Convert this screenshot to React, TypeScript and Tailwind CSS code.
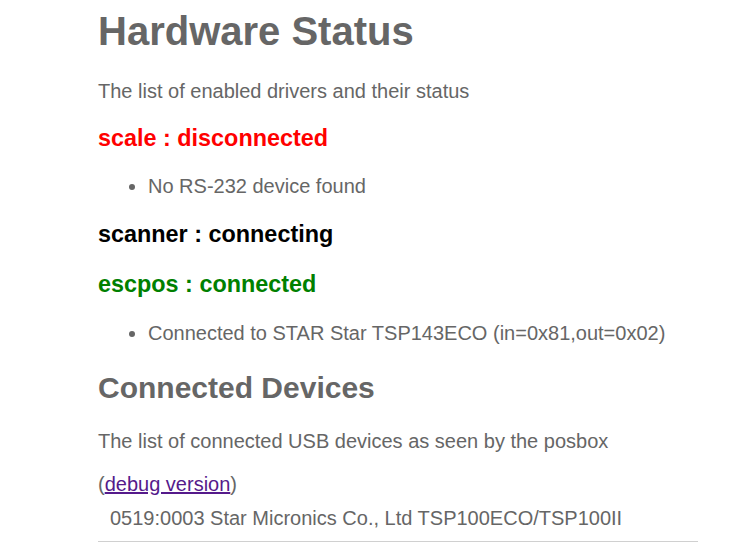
export default function App() {
  const font = { fontFamily: '"Liberation Sans", Arial, sans-serif' };
  return (
    <div className="min-h-[546px] bg-white text-[#666666]" style={font}>
      <div className="ml-[98px] w-[600px] pt-[8px]">
        <h1 className="text-[40px] leading-[46px] font-bold">Hardware Status</h1>
        <p className="mt-[26px] text-[20px] leading-[23px]">The list of enabled drivers and their status</p>
        <h3 className="mt-[22px] text-[23.4px] leading-[27px] font-bold text-[#ff0000]">scale : disconnected</h3>
        <ul className="mt-[23px] list-disc pl-[50px] text-[20px] leading-[23px]">
          <li>No RS-232 device found</li>
        </ul>
        <h3 className="mt-[23px] text-[23.4px] leading-[27px] font-bold text-black">scanner : connecting</h3>
        <h3 className="mt-[23px] text-[23.4px] leading-[27px] font-bold text-[#008000]">escpos : connected</h3>
        <ul className="mt-[24px] list-disc pl-[50px] text-[20px] leading-[23px]">
          <li>Connected to STAR Star TSP143ECO (in=0x81,out=0x02)</li>
        </ul>
        <h2 className="mt-[24.5px] text-[30px] leading-[35px] font-bold">Connected Devices</h2>
        <p className="mt-[25.5px] text-[20px] leading-[23px]">The list of connected USB devices as seen by the posbox</p>
        <p className="mt-[20px] text-[20px] leading-[23px]">
          (<a href="#" className="text-[#551a8b] underline">debug version</a>)
        </p>
        <div className="mt-[11px] pl-[12px] text-[20px] leading-[23px]">0519:0003 Star Micronics Co., Ltd TSP100ECO/TSP100II</div>
        <hr className="mt-[11px] border-t border-[#d0d0d0]" />
      </div>
    </div>
  );
}
